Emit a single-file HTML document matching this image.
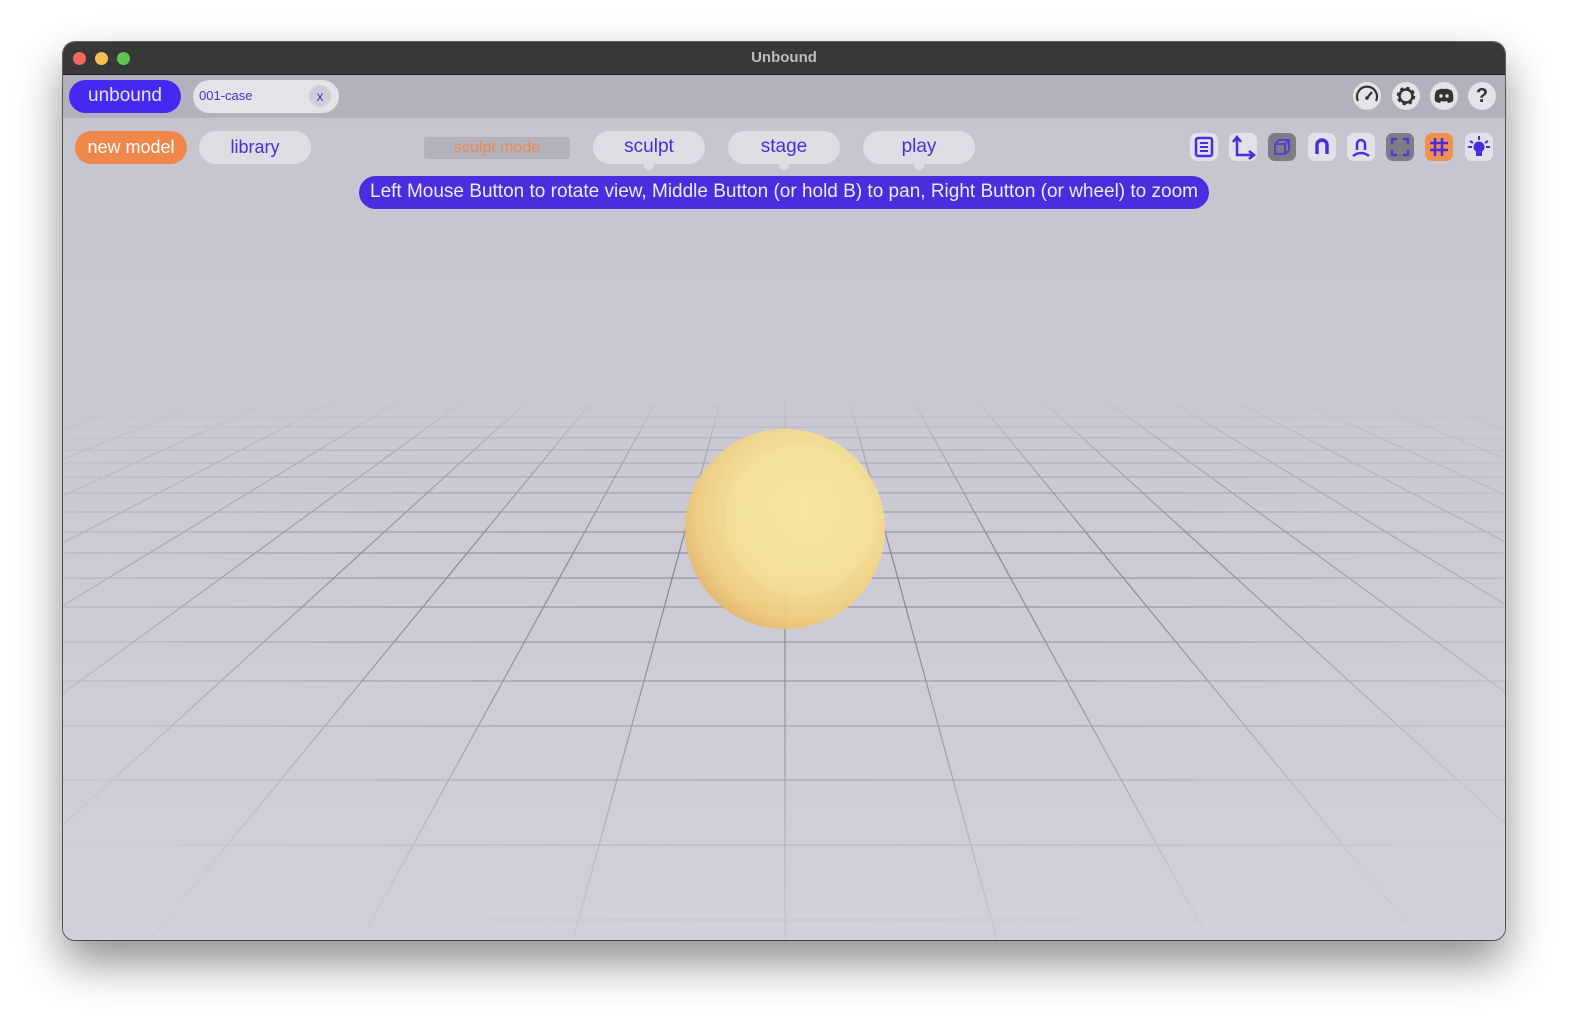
<!DOCTYPE html>
<html><head><meta charset="utf-8"><style>
html,body{margin:0;padding:0;width:1570px;height:1024px;background:#fff;overflow:hidden;font-family:"Liberation Sans",sans-serif}
.win{position:absolute;left:63px;top:42px;width:1442px;height:898px;border-radius:12px;overflow:hidden;box-shadow:0 22px 45px rgba(0,0,0,.45),0 0 0 1px #6a6a6a;background:linear-gradient(#c5c4ce,#cac9d3 40%,#d1d0d9)}
.title{position:absolute;left:0;top:0;width:100%;height:32px;background:#383838;border-bottom:1px solid #222;color:#bdbdbd;font-weight:bold;font-size:15px;text-align:center;line-height:31px}
.dot{position:absolute;top:10px;width:13px;height:13px;border-radius:50%}
.tabbar{position:absolute;left:0;top:33px;width:100%;height:43px;background:#b3b2bc}
.pill{position:absolute;border-radius:17px;text-align:center;color:#4a2de0}
.ic{position:absolute;top:133px;width:28px;height:28px;border-radius:7px;background:#e2e1e7}
.ti{position:absolute;top:82px;width:28px;height:28px;border-radius:50%;background:#e4e3e8}
svg{position:absolute}
</style></head><body>
<div class="win">
<svg width="1442" height="898" viewBox="63 42 1442 898" style="left:0;top:0">
<defs><linearGradient id="fg" x1="0" y1="395" x2="0" y2="940" gradientUnits="userSpaceOnUse"><stop offset="0" stop-color="#fff" stop-opacity="0"/><stop offset=".1" stop-color="#fff" stop-opacity=".45"/><stop offset=".3" stop-color="#fff" stop-opacity=".9"/><stop offset=".55" stop-color="#fff" stop-opacity=".75"/><stop offset="1" stop-color="#fff" stop-opacity=".3"/></linearGradient>
<radialGradient id="rg" cx="785" cy="560" r="800" gradientUnits="userSpaceOnUse" gradientTransform="translate(785 560) scale(1 0.55) translate(-785 -560)"><stop offset="0" stop-color="#fff"/><stop offset=".5" stop-color="#fff" stop-opacity=".9"/><stop offset="1" stop-color="#fff" stop-opacity=".2"/></radialGradient>
<mask id="m"><rect x="0" y="390" width="1600" height="560" fill="url(#fg)"/></mask>
<mask id="m2"><rect x="0" y="390" width="1600" height="560" fill="url(#rg)"/></mask>
<radialGradient id="sp" cx="0.6" cy="0.4" r="0.65"><stop offset="0" stop-color="#f7e69c"/><stop offset=".55" stop-color="#f5de92"/><stop offset=".85" stop-color="#f0cc7e"/><stop offset="1" stop-color="#e4b56a"/></radialGradient></defs>
<g mask="url(#m2)"><g mask="url(#m)" stroke="#7a7988" stroke-width="1.2" fill="none">
<line x1="785" y1="400" x2="785" y2="940"/>
<line x1="721" y1="400" x2="573" y2="940"/><line x1="657" y1="400" x2="361" y2="940"/><line x1="593" y1="400" x2="149" y2="940"/><line x1="529" y1="400" x2="-63" y2="940"/><line x1="465" y1="400" x2="-275" y2="940"/><line x1="401" y1="400" x2="-487" y2="940"/><line x1="337" y1="400" x2="-699" y2="940"/><line x1="273" y1="400" x2="-911" y2="940"/><line x1="209" y1="400" x2="-1123" y2="940"/><line x1="145" y1="400" x2="-1335" y2="940"/><line x1="81" y1="400" x2="-1547" y2="940"/>
<line x1="849" y1="400" x2="997" y2="940"/><line x1="913" y1="400" x2="1209" y2="940"/><line x1="977" y1="400" x2="1421" y2="940"/><line x1="1041" y1="400" x2="1633" y2="940"/><line x1="1105" y1="400" x2="1845" y2="940"/><line x1="1169" y1="400" x2="2057" y2="940"/><line x1="1233" y1="400" x2="2269" y2="940"/><line x1="1297" y1="400" x2="2481" y2="940"/><line x1="1361" y1="400" x2="2693" y2="940"/><line x1="1425" y1="400" x2="2905" y2="940"/><line x1="1489" y1="400" x2="3117" y2="940"/>
<g stroke-width="1.1">
<line x1="0" x2="1600" y1="399" y2="399"/><line x1="0" x2="1600" y1="408" y2="408"/><line x1="0" x2="1600" y1="417" y2="417"/><line x1="0" x2="1600" y1="427" y2="427"/><line x1="0" x2="1600" y1="438" y2="438"/><line x1="0" x2="1600" y1="450" y2="450"/><line x1="0" x2="1600" y1="463" y2="463"/><line x1="0" x2="1600" y1="477" y2="477"/><line x1="0" x2="1600" y1="493" y2="493"/><line x1="0" x2="1600" y1="512" y2="512"/><line x1="0" x2="1600" y1="532" y2="532"/><line x1="0" x2="1600" y1="553" y2="553"/><line x1="0" x2="1600" y1="578" y2="578"/><line x1="0" x2="1600" y1="607" y2="607"/><line x1="0" x2="1600" y1="642" y2="642"/><line x1="0" x2="1600" y1="681" y2="681"/><line x1="0" x2="1600" y1="726" y2="726"/><line x1="0" x2="1600" y1="780" y2="780"/><line x1="0" x2="1600" y1="845" y2="845"/><line x1="0" x2="1600" y1="920" y2="920"/>
</g></g></g>
<circle cx="785" cy="529" r="100" fill="url(#sp)" opacity=".94"/>
<circle cx="800" cy="520" r="75" fill="#f7e8a0" opacity=".3"/>
</svg>
<div class="title">Unbound</div>
<div class="dot" style="left:10px;background:#ec6a5e"></div><div class="dot" style="left:32px;background:#f4bf4f"></div><div class="dot" style="left:54px;background:#61c554"></div>
<div class="tabbar"></div>
</div>
<div class="pill" style="left:69px;top:80px;width:112px;height:33px;background:#4629f0;color:#e8e6ff;font-size:19px;line-height:32px">unbound</div>
<div class="pill" style="left:193px;top:80px;width:146px;height:33px;background:#e4e3e8;"><span style="position:absolute;left:6px;top:8px;font-size:13px">001-case</span><span style="position:absolute;left:116px;top:5px;width:22px;height:22px;border-radius:50%;background:#cfced6;font-size:14px;line-height:22px">x</span></div>
<div class="pill" style="left:75px;top:131px;width:112px;height:33px;background:#f0874a;color:#fff;font-size:18px;line-height:32px">new model</div>
<div class="pill" style="left:199px;top:131px;width:112px;height:33px;background:#dedde3;font-size:18px;line-height:32px">library</div>
<div style="position:absolute;left:424px;top:137px;width:146px;height:22px;border-radius:3px;background:#b3b2bc;color:#ef8a50;font-size:16px;text-align:center;line-height:21px">sculpt mode</div>
<div class="pill" style="left:593px;top:131px;width:112px;height:33px;background:#dedde3;font-size:19px;line-height:32px">sculpt</div>
<div class="pill" style="left:728px;top:131px;width:112px;height:33px;background:#dedde3;font-size:19px;line-height:32px">stage</div>
<div class="pill" style="left:863px;top:131px;width:112px;height:33px;background:#dedde3;font-size:19px;line-height:32px">play</div>
<div style="position:absolute;left:644px;top:160px;width:10px;height:10px;border-radius:50%;background:#dedde3"></div>
<div style="position:absolute;left:779px;top:160px;width:10px;height:10px;border-radius:50%;background:#dedde3"></div>
<div style="position:absolute;left:914px;top:160px;width:10px;height:10px;border-radius:50%;background:#dedde3"></div>
<div style="position:absolute;left:359px;top:176px;width:850px;height:33px;border-radius:17px;background:#4a2dde;color:#eeeaff;font-size:19px;line-height:32px;text-align:center;white-space:nowrap">Left Mouse Button to rotate view, Middle Button (or hold B) to pan, Right Button (or wheel) to zoom</div>
<div class="ti" style="left:1353px"><svg width="28" height="28" viewBox="0 0 28 28" style="left:0;top:0"><path d="M5 19a10 10 0 1 1 18 0" fill="none" stroke="#333" stroke-width="2.2"/><path d="M14 16l5-6" stroke="#333" stroke-width="2.2"/><circle cx="14" cy="16" r="1.8" fill="#333"/></svg></div>
<div class="ti" style="left:1392px"><svg width="28" height="28" viewBox="0 0 28 28" style="left:0;top:0"><circle cx="14" cy="14" r="7.5" fill="none" stroke="#333" stroke-width="3.5" stroke-dasharray="3 2.9"/><circle cx="14" cy="14" r="6.5" fill="none" stroke="#333" stroke-width="2.5"/></svg></div>
<div class="ti" style="left:1430px"><svg width="28" height="28" viewBox="0 0 28 28" style="left:0;top:0"><path d="M6 9q4-3 8-2q4-1 8 2q2 5 1 10q-3 2-5 2l-1-2q-3 1-6 0l-1 2q-2 0-5-2q-1-5 1-10z" fill="#333"/><circle cx="11" cy="14" r="1.7" fill="#e4e3e8"/><circle cx="17" cy="14" r="1.7" fill="#e4e3e8"/></svg></div>
<div class="ti" style="left:1468px;font-weight:bold;color:#333;font-size:20px;text-align:center;line-height:28px">?</div>
<div class="ic" style="left:1190px"><svg width="28" height="28" viewBox="0 0 28 28" style="left:0;top:0"><rect x="6" y="5" width="16" height="18" rx="2" fill="none" stroke="#4a2de0" stroke-width="2.5"/><path d="M10 10h8M10 14h8M10 18h8" stroke="#4a2de0" stroke-width="2"/></svg></div>
<div class="ic" style="left:1229px"><svg width="28" height="28" viewBox="0 0 28 28" style="left:0;top:0"><path d="M8 5v17h16M4 9l4-5 4 5M20 18l5 4-5 4" fill="none" stroke="#4a2de0" stroke-width="2.5"/></svg></div>
<div class="ic" style="left:1268px;background:#7e7d86"><svg width="28" height="28" viewBox="0 0 28 28" style="left:0;top:0"><path d="M7 11l4-4h10v10l-4 4H7zM7 11h10v10M17 11l4-4" fill="none" stroke="#4a3fd0" stroke-width="1.8"/></svg></div>
<div class="ic" style="left:1308px"><svg width="28" height="28" viewBox="0 0 28 28" style="left:0;top:0"><path d="M9 21V12a5 5 0 0 1 10 0v9" fill="none" stroke="#4a2de0" stroke-width="3.5"/></svg></div>
<div class="ic" style="left:1347px"><svg width="28" height="28" viewBox="0 0 28 28" style="left:0;top:0"><path d="M10 17v-6a4 4 0 0 1 8 0v6M6 23q8-6 16 0" fill="none" stroke="#4a2de0" stroke-width="2.5"/></svg></div>
<div class="ic" style="left:1386px;background:#7e7d86"><svg width="28" height="28" viewBox="0 0 28 28" style="left:0;top:0"><path d="M6 11V6h5M17 6h5v5M22 17v5h-5M11 22H6v-5" fill="none" stroke="#4a3fd0" stroke-width="2.5"/></svg></div>
<div class="ic" style="left:1425px;background:#f0904e"><svg width="28" height="28" viewBox="0 0 28 28" style="left:0;top:0"><path d="M10 5v18M17 5v18M5 10h18M5 17h18" stroke="#4a2de0" stroke-width="2.5"/></svg></div>
<div class="ic" style="left:1465px"><svg width="28" height="28" viewBox="0 0 28 28" style="left:0;top:0"><circle cx="14" cy="14" r="5.5" fill="#4a2de0"/><rect x="11" y="18" width="6" height="5" fill="#4a2de0"/><path d="M14 3v4M5 8l3 2M23 8l-3 2M3 14h4M21 14h4" stroke="#4a2de0" stroke-width="2"/></svg></div>
</body></html>
